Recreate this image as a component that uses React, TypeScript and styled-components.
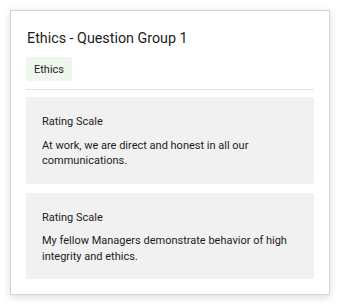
import React from 'react';
import styled, { createGlobalStyle } from 'styled-components';

const GlobalStyle = createGlobalStyle`
    html, body {
        margin: 0;
        padding: 0;
        background: #ffffff;
    }

    body {
        font-family: Roboto, Inter, "Liberation Sans", sans-serif;
        color: #1f1f1f;
    }
`;

const Page = styled.div`
    padding: 10px;
    width: 320px;
`;

const Card = styled.section`
    background: #ffffff;
    border: 1px solid #d4d4d4;
    box-shadow: 0 2px 8px rgba(0, 0, 0, 0.14);
    padding: 18px 15px 14px;
    display: flex;
    flex-direction: column;
    height: 285px;
    box-sizing: border-box;
`;

const Title = styled.h2`
    margin: 0 0 0 1px;
    font-size: 14.3px;
    font-weight: 400;
    line-height: 19px;
    color: #1c1c1c;
`;

const Tag = styled.span`
    align-self: flex-start;
    margin-top: 9px;
    height: 24px;
    padding: 0 8px;
    display: flex;
    align-items: center;
    background: #eef6ee;
    border-radius: 2px;
    font-size: 11px;
    color: #222222;
`;

const Divider = styled.hr`
    margin: 8px 0 7px;
    border: none;
    border-top: 1px solid #e2e2e2;
`;

const QuestionList = styled.div`
    display: flex;
    flex-direction: column;
    gap: 9px;
`;

const Question = styled.div`
    background: #f1f1f1;
    border-radius: 2px;
    padding: 17px 16px 15px;
    display: flex;
    flex-direction: column;
    gap: 8px;
`;

const QuestionType = styled.div`
    font-size: 11px;
    line-height: 15.5px;
    color: #222222;
`;

const QuestionText = styled.div`
    font-size: 11px;
    line-height: 15.5px;
    color: #1c1c1c;
`;

const questions = [
    'At work, we are direct and honest in all our communications.',
    'My fellow Managers demonstrate behavior of high integrity and ethics.',
];

const App: React.FC = () => {
    return (
        <>
            <GlobalStyle />
            <Page>
                <Card>
                    <Title>Ethics - Question Group 1</Title>
                    <Tag>Ethics</Tag>
                    <Divider />
                    <QuestionList>
                        {questions.map((q) => (
                            <Question key={q}>
                                <QuestionType>Rating Scale</QuestionType>
                                <QuestionText>{q}</QuestionText>
                            </Question>
                        ))}
                    </QuestionList>
                </Card>
            </Page>
        </>
    );
};

export default App;
